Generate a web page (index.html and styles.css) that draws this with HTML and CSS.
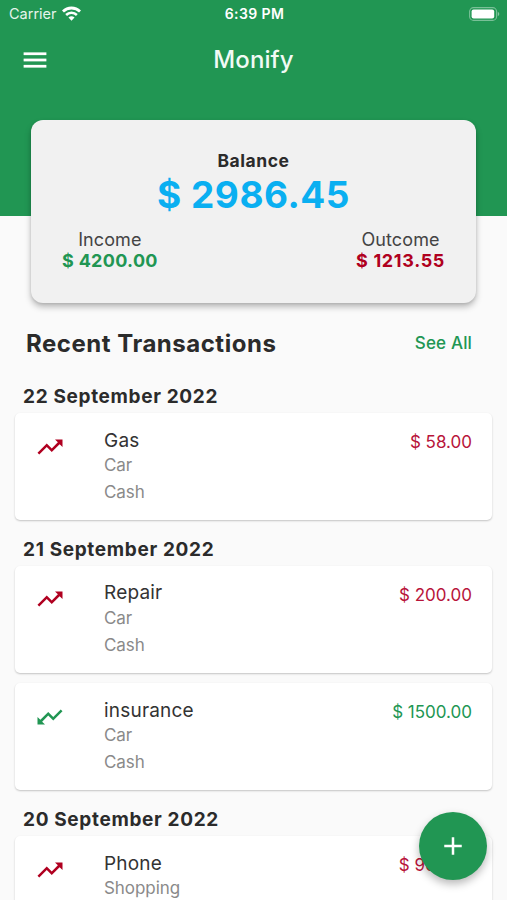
FILE: index.html
```html
<!DOCTYPE html>
<html lang="en">
<head>
<meta charset="UTF-8">
<meta name="viewport" content="width=device-width, initial-scale=1.0">
<title>Monify</title>
<link rel="stylesheet" href="styles.css">
</head>

<body>
<!-- shared icon shapes -->
<svg class="defs">
    <symbol id="trend" viewBox="0 0 24 24">
        <path d="M16 6l2.29 2.29-4.88 4.88-4-4L2 16.59 3.41 18l6-6 4 4 6.3-6.29L22 12V6z"/>
    </symbol>
</svg>

<header class="header">
    <div class="status">
        <div class="carrier">
            <span>Carrier</span>
            <svg class="wifi" viewBox="0 0 18 14">
                <path d="M0.9 5.1a11.6 11.6 0 0 1 16.2 0" fill="none" stroke="#fff" stroke-width="2.7"/>
                <path d="M3.9 8.4a7.3 7.3 0 0 1 10.2 0" fill="none" stroke="#fff" stroke-width="2.4"/>
                <path d="M9 13.8L6.1 10.9a4.2 4.2 0 0 1 5.8 0z" fill="#fff"/>
            </svg>
        </div>
        <div class="time">6:39 PM</div>
        <svg class="battery" viewBox="0 0 31 14">
            <rect x="0.6" y="0.6" width="27" height="12.8" rx="4" fill="none" stroke="#fff" stroke-opacity="0.4" stroke-width="1.1"/>
            <rect x="2.6" y="2.6" width="22.6" height="8.8" rx="2" fill="#fff"/>
            <path d="M28.8 4.8c2 .8 2 3.6 0 4.4z" fill="#fff" fill-opacity="0.45"/>
        </svg>
    </div>
    <div class="appbar">
        <svg class="menu" viewBox="0 0 24 24"><path d="M3 18h18v-2H3v2zm0-5h18v-2H3v2zm0-7v2h18V6H3z"/></svg>
        <h1>Monify</h1>
    </div>
</header>

<section class="balance">
    <div class="balance-label">Balance</div>
    <div class="balance-total">$ 2986.45</div>
    <div class="balance-row">
        <div class="part">
            <div class="part-name">Income</div>
            <div class="part-sum green">$ 4200.00</div>
        </div>
        <div class="part">
            <div class="part-name">Outcome</div>
            <div class="part-sum part-out red">$ 1213.55</div>
        </div>
    </div>
</section>

<div class="list-head">
    <h2>Recent Transactions</h2>
    <a class="see-all">See All</a>
</div>

<main class="list">
    <h3>22 September 2022</h3>
    <div class="item">
        <svg class="icon red"><use href="#trend"/></svg>
        <div class="info">
            <div class="name">Gas</div>
            <div class="sub">Car</div>
            <div class="sub">Cash</div>
        </div>
        <div class="sum red">$ 58.00</div>
    </div>

    <h3>21 September 2022</h3>
    <div class="item">
        <svg class="icon red"><use href="#trend"/></svg>
        <div class="info">
            <div class="name">Repair</div>
            <div class="sub">Car</div>
            <div class="sub">Cash</div>
        </div>
        <div class="sum red">$ 200.00</div>
    </div>
    <div class="item">
        <svg class="icon in green"><use href="#trend"/></svg>
        <div class="info">
            <div class="name">insurance</div>
            <div class="sub">Car</div>
            <div class="sub">Cash</div>
        </div>
        <div class="sum green">$ 1500.00</div>
    </div>

    <h3>20 September 2022</h3>
    <div class="item">
        <svg class="icon red"><use href="#trend"/></svg>
        <div class="info">
            <div class="name">Phone</div>
            <div class="sub">Shopping</div>
        </div>
        <div class="sum red">$ 900.00</div>
    </div>
</main>

<div class="add">
    <svg viewBox="0 0 24 24"><path d="M19 13h-6v6h-2v-6H5v-2h6V5h2v6h6v2z"/></svg>
</div>
</body>
</html>
```
FILE: styles.css
```css
* {
    box-sizing: border-box;
}
body {
    margin: 0;
    height: 900px;
    overflow: hidden;
    background: #fafafa;
    color: #2b2b2b;
    font-family: Inter, "Liberation Sans", sans-serif;
}
h1, h2, h3 {
    margin: 0;
}
.defs {
    display: none;
}
.green {
    color: #219653;
}
.red {
    color: #b00020;
}

/* header */
.header {
    height: 216px;
    background: #219653;
    color: #fff;
}
.status {
    display: grid;
    grid-template-columns: 1fr auto 1fr;
    align-items: center;
    height: 27px;
    padding: 0 7px 0 9px;
    font-size: 14.5px;
}
.carrier {
    display: flex;
    align-items: center;
    gap: 5px;
    color: #e6f4ec;
}
.wifi {
    width: 19px;
    height: 15px;
    margin-top: -1px;
}
.time {
    font-weight: 600;
    font-size: 14px;
    letter-spacing: 0.4px;
}
.battery {
    justify-self: end;
    width: 31px;
    height: 14px;
}
.appbar {
    display: grid;
    grid-template-columns: 1fr auto 1fr;
    align-items: center;
    height: 65px;
    padding: 0 20px;
}
.menu {
    width: 30px;
    height: 30px;
    fill: #fff;
    stroke: #fff;
    stroke-width: 0.2px;
}
.appbar h1 {
    font-size: 24px;
    font-weight: 500;
    letter-spacing: 0.1px;
    color: #f1faf5;
}

/* balance */
.balance {
    position: relative;
    height: 183px;
    margin: -96.5px 31px 0;
    padding: 29px 31px 0;
    border-radius: 12px;
    background: #f1f1f1;
    box-shadow: 0 4px 6px rgba(0, 0, 0, 0.25), 0 1px 3px rgba(0, 0, 0, 0.1);
    text-align: center;
}
.balance-label {
    font-size: 17.5px;
    font-weight: 700;
    line-height: 24px;
    letter-spacing: 0.55px;
}
.balance-total {
    font-size: 37px;
    font-weight: 700;
    line-height: 44px;
    letter-spacing: 0.5px;
    color: #0aaff1;
}
.balance-row {
    display: flex;
    justify-content: space-between;
    margin-top: 12px;
}
.part-name {
    font-size: 18px;
    line-height: 21px;
    letter-spacing: 0.1px;
    color: #444;
}
.part-sum {
    font-size: 18px;
    font-weight: 700;
    line-height: 22px;
    letter-spacing: 0.3px;
}
.part-out {
    letter-spacing: 0.65px;
}

/* list */
.list-head {
    display: flex;
    justify-content: space-between;
    align-items: center;
    height: 80.5px;
    padding: 0 35px 0 26px;
}
.list-head h2 {
    padding-top: 1px;
    font-size: 24px;
    font-weight: 700;
    letter-spacing: 0.52px;
}
.see-all {
    font-size: 17px;
    font-weight: 500;
    letter-spacing: 0.15px;
    color: #219653;
}
.list {
    padding: 0 15px;
}
.list h3 {
    padding: 1px 0 0 8px;
    font-size: 19px;
    font-weight: 700;
    line-height: 26px;
    letter-spacing: 0.66px;
    margin-bottom: 3px;
}
.item {
    display: flex;
    height: 107px;
    margin-bottom: 10.5px;
    padding: 15px 20px 0;
    border-radius: 5px;
    background: #fff;
    box-shadow: 0 1px 2px rgba(0, 0, 0, 0.22);
}
.list .item + h3 {
    margin-top: 15.8px;
}
.icon {
    width: 30px;
    height: 30px;
    margin-top: 3.5px;
    fill: currentColor;
}
.in {
    transform: rotate(180deg);
}
.info {
    flex: 1;
    margin-left: 39px;
}
.name {
    padding-top: 0.5px;
    font-size: 19px;
    line-height: 23.3px;
    letter-spacing: 0.2px;
    color: #333;
}
.sub {
    font-size: 17px;
    line-height: 27px;
    letter-spacing: -0.05px;
    color: #8a8a8a;
}
.sum {
    font-size: 17px;
    line-height: 28px;
}
.sum.red {
    color: #b8143a;
}

/* add button */
.add {
    position: fixed;
    right: 20px;
    bottom: 20px;
    display: flex;
    align-items: center;
    justify-content: center;
    width: 68px;
    height: 68px;
    border-radius: 50%;
    background: #219653;
    box-shadow: 0 4px 8px rgba(0, 0, 0, 0.28);
}
.add svg {
    width: 30px;
    height: 30px;
    fill: #fff;
}
```
